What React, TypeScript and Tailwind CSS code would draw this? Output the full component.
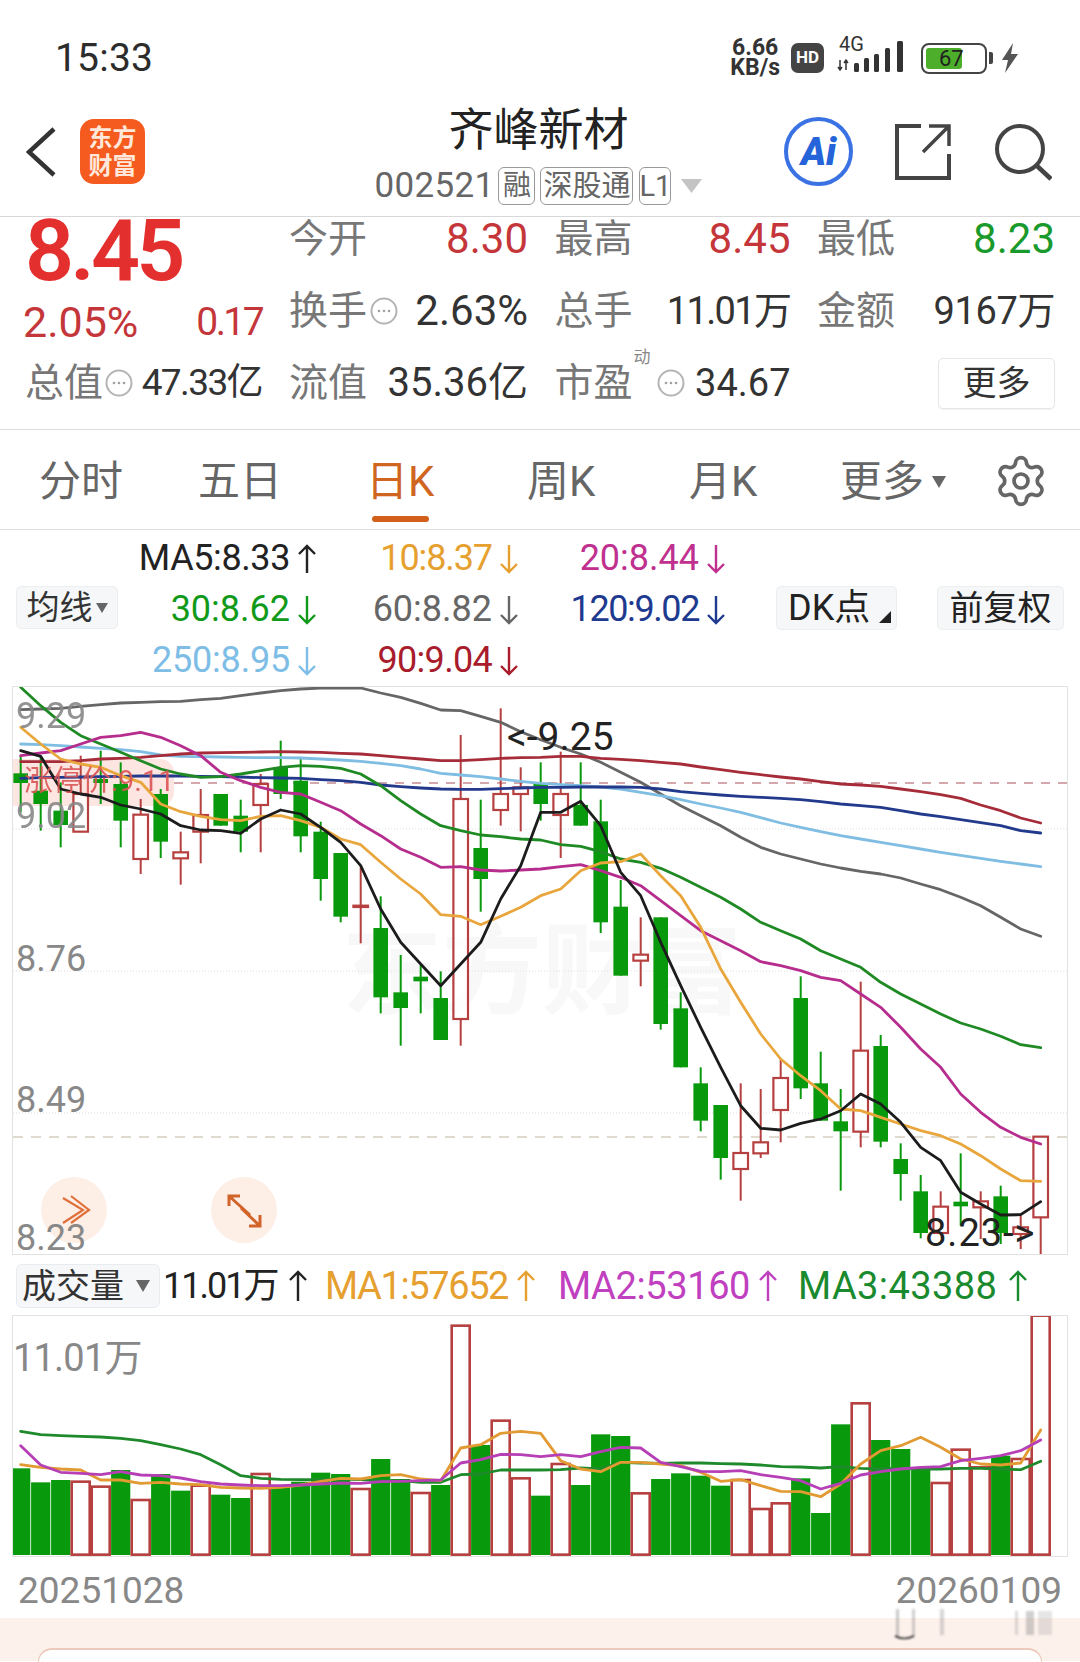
import React from "react";
import { Settings } from "lucide-react";

const X = (i: number) => 20.7 + 20 * i;
const Y = (z: number) => 680 + z / 3;
const GREEN = "#089a0c";
const RED = "#b5403f";

// [kind, bodyTop, bodyBottom, wickTop, wickBottom] in zoom units
type C = [string, number, number, number, number];
const K: C[] = [
  ["g",283,312,230,400],["g",335,375,230,455],["g",395,438,310,505],["r",345,458,230,458],["g",300,312,215,375],
  ["g",315,425,250,505],["r",407,540,360,585],["g",345,488,330,537],["r",520,538,458,617],["r",408,458,330,553],
  ["g",345,440,345,440],["g",410,458,362,520],["r",315,378,285,520],["g",265,345,185,360],["g",305,472,240,520],
  ["g",458,600,428,665],["g",522,713,522,730],["r",680,684,565,793],["g",747,955,652,1003],["g",940,987,828,1100],
  ["g",893,907,858,1003],["g",957,1083,877,1083],["r",360,1020,168,1100],["g",507,600,362,698],["r",345,393,88,440],
  ["r",325,345,265,457],["g",313,375,250,425],["r",345,408,218,537],["g",378,440,250,440],["g",427,730,362,762],
  ["g",683,890,603,890],["r",827,845,715,922],["g",715,1035,715,1052],["g",988,1165,940,1165],["g",1213,1325,1165,1357],
  ["g",1278,1437,1278,1502],["r",1422,1470,1213,1565],["r",1390,1423,1230,1437],["r",1197,1293,1138,1390],["g",957,1228,892,1260],
  ["g",1213,1325,1118,1325],["g",1327,1357,1230,1535],["r",1115,1358,908,1405],["g",1101,1388,1068,1405],["g",1440,1485,1393,1565],
  ["g",1537,1662,1488,1678],["r",1583,1662,1537,1662],["g",1568,1582,1423,1640],["r",1567,1585,1537,1680],["g",1552,1662,1520,1695],
  ["r",1645,1665,1610,1710],["r",1373,1615,1373,1725],
];

const MA5 = [215,232,330,345,355,378,390,405,440,453,455,463,420,393,405,445,490,560,690,790,855,920,855,790,660,560,400,400,367,440,580,650,790,920,1045,1165,1280,1348,1353,1333,1320,1295,1245,1275,1330,1405,1445,1540,1575,1608,1607,1568];
const MA10 = [145,195,240,255,265,290,310,375,398,412,422,425,412,410,425,445,480,497,550,600,645,707,712,737,712,685,650,630,575,552,548,525,590,650,745,870,970,1065,1140,1190,1235,1290,1295,1315,1335,1355,1370,1395,1430,1470,1505,1507];
const MA20 = [230,222,215,195,175,170,160,175,200,230,280,305,325,340,345,370,395,435,470,510,535,565,563,573,576,573,570,563,557,575,595,620,665,710,755,785,815,848,860,875,895,905,945,985,1045,1110,1165,1245,1300,1345,1375,1395];
const MA30 = [25,80,130,170,195,220,245,270,285,295,293,285,275,265,260,262,268,285,320,365,405,440,455,468,473,480,483,497,502,518,540,550,568,595,625,655,690,730,755,780,815,840,865,910,945,975,1005,1032,1050,1072,1097,1106];
const MA60 = [92,90,88,82,77,72,70,68,67,62,58,50,42,35,30,27,27,27,42,55,73,93,95,112,130,158,182,205,225,250,280,310,345,380,410,440,475,505,525,540,555,567,577,585,597,615,632,655,680,715,750,772];
const MA90 = [248,248,248,245,240,238,235,230,225,222,221,220,219,218,219,220,223,225,230,235,240,245,245,242,238,236,235,232,232,238,241,245,250,255,264,272,280,287,294,300,308,315,318,322,330,338,347,358,378,395,417,432];
const MA120 = [298,296,295,294,293,292,291,291,291,292,293,294,296,297,298,302,305,310,318,323,327,330,331,331,329,327,325,325,324,324,324,325,330,338,343,348,352,355,358,362,368,375,380,385,395,405,413,422,431,440,455,462];
const MA250 = [195,197,200,204,208,212,218,228,232,233,234,235,236,236,237,240,243,247,253,260,270,283,288,293,300,307,313,317,320,324,330,340,350,362,375,387,400,416,432,445,458,470,480,490,500,510,520,529,538,547,555,563];

const V: [string, number][] = [
  ["g",508],["g",550],["g",543],["r",548],["r",563],["g",513],["r",603],["g",525],["g",575],["r",560],["g",587],["g",597],["r",525],
  ["g",565],["g",548],["g",521],["g",525],["r",570],["g",480],["g",540],["r",582],["g",558],["r",80],["g",438],["r",365],["r",538],["g",590],
  ["r",495],["g",558],["g",406],["g",411],["r",583],["g",540],["g",523],["g",530],["g",560],["r",543],["r",630],["r",613],["g",538],["g",642],
  ["g",376],["r",313],["g",423],["g",450],["g",510],["r",552],["r",452],["r",505],["g",470],["r",480],["r",50],
];
const VY = (z: number) => 1300 + z / 3;
const VM1 = [497,505,510,513,543,543,553,550,555,557,565,567,568,565,558,547,538,540,530,527,540,545,447,437,403,397,403,485,510,518,490,490,495,500,520,547,542,560,577,578,593,555,495,455,440,415,445,480,495,498,492,393];
const VM2 = [440,498,520,523,527,518,528,530,537,548,555,558,560,560,558,555,552,553,548,547,545,543,492,482,466,467,473,467,473,458,445,447,490,503,517,518,515,527,535,545,570,553,528,518,510,505,503,485,478,470,455,423];
const VM3 = [397,407,410,412,414,418,425,437,450,467,497,530,538,541,542,542,540,542,545,545,550,550,527,525,513,513,513,512,507,510,490,492,493,492,492,494,495,498,503,504,507,503,508,510,508,510,510,508,508,510,512,487];

const pts = (a: number[], f: (z: number) => number) => a.map((z, i) => `${X(i).toFixed(1)},${f(z).toFixed(1)}`).join(" ");

function Line({ d, c, f, w = 2.8 }: { d: number[]; c: string; f: (z: number) => number; w?: number }) {
  return <polyline points={pts(d, f)} fill="none" stroke={c} strokeWidth={w} strokeLinejoin="round" strokeLinecap="round" />;
}

function Arrow({ c, up, h = 30 }: { c: string; up?: boolean; h?: number }) {
  return (
    <svg width="22" height={h} viewBox={`0 0 22 ${h}`} className="shrink-0">
      {up ? (
        <path d={`M11 ${h - 1}V2M3 10L11 2L19 10`} fill="none" stroke={c} strokeWidth="2.4" />
      ) : (
        <path d={`M11 1V${h - 2}M3 ${h - 10}L11 ${h - 2}L19 ${h - 10}`} fill="none" stroke={c} strokeWidth="2.4" />
      )}
    </svg>
  );
}

function Info() {
  return (
    <svg width="28" height="28" viewBox="0 0 28 28" className="shrink-0">
      <circle cx="14" cy="14" r="12.5" fill="none" stroke="#b4b4b4" strokeWidth="2" />
      <circle cx="9" cy="14" r="1.3" fill="#a0a0a0" />
      <circle cx="14" cy="14" r="1.3" fill="#a0a0a0" />
      <circle cx="19" cy="14" r="1.3" fill="#a0a0a0" />
    </svg>
  );
}

function Stat({ label, value, vc, info, sup, vt = "text-[42px]" }: { label: string; value: string; vc: string; info?: boolean; sup?: boolean; vt?: string }) {
  return (
    <div className="flex h-[44px] items-center justify-between">
      <div className="relative flex items-center">
        <span className="w-[78px] whitespace-nowrap text-[39px] leading-[44px] text-[#777]">{label}</span>
        {sup && <span className="absolute left-[79px] top-[-14px] text-[17px] leading-[20px] text-[#888]">动</span>}
        {info && <span className={sup ? "ml-[24px]" : "ml-[3px]"}><Info /></span>}
      </div>
      <span className={`whitespace-nowrap leading-[44px] ${vc} ${vt}`}>{value}</span>
    </div>
  );
}

function Leg({ t, c, tc, up }: { t: string; c: string; tc: string; up?: boolean }) {
  return (
    <div className="flex h-[51px] items-center justify-end gap-[6px]">
      <span className={`whitespace-nowrap text-[36px] leading-[51px] ${tc}`}>{t}</span>
      <Arrow c={c} up={up} />
    </div>
  );
}

export default function App() {
  return (
    <div className="relative h-[1662px] w-[1080px] overflow-hidden bg-white font-['Roboto','Noto_Sans_CJK_SC',sans-serif]">
      {/* status bar */}
      <div className="flex h-[100px] items-center justify-between pl-[55px] pr-[61px] pt-[16px]">
        <span className="text-[39px] leading-[44px] tracking-[0.2px] text-[#2c2c2c]">15:33</span>
        <div className="flex items-center">
          <div className="flex flex-col items-center text-[23px] font-bold leading-[20px] text-[#333]">
            <span>6.66</span>
            <span>KB/s</span>
          </div>
          <div className="ml-[11px] flex h-[30px] w-[33px] items-center justify-center rounded-[7px] bg-[#444] text-[17px] font-bold text-white">HD</div>
          <div className="relative ml-[13px] h-[36px] w-[69px]">
            <span className="absolute left-[2px] top-[-7px] text-[20px] leading-[22px] text-[#333]">4G</span>
            <svg width="69" height="36" viewBox="0 0 69 36" className="absolute left-0 top-0">
              <path d="M3 20v10M1 27l2 3 2-3M9 30V20M7 23l2-3 2 3" fill="none" stroke="#333" strokeWidth="1.5" />
              <rect x="17" y="23" width="5" height="9" rx="1.5" fill="#333" />
              <rect x="27" y="18" width="5" height="14" rx="1.5" fill="#333" />
              <rect x="37" y="14" width="5" height="18" rx="1.5" fill="#333" />
              <rect x="48" y="8" width="5" height="24" rx="1.5" fill="#333" />
              <rect x="60" y="1" width="6" height="31" rx="1.5" fill="#333" />
            </svg>
          </div>
          <div className="relative ml-[15px] flex h-[31px] w-[66px] items-center rounded-[8px] border-2 border-[#444] p-[3px]">
            <div className="h-full w-[36px] rounded-[3px] bg-[#4cae2a]" />
            <span className="absolute left-[16px] top-[1px] text-[22px] leading-[26px] text-[#222]">67</span>
          </div>
          <div className="ml-[2px] h-[12px] w-[4px] rounded-r-[2px] bg-[#444]" />
          <svg width="18" height="30" viewBox="0 0 18 30" className="ml-[8px]">
            <path d="M12 0L1 17h6l-3 13L17 11h-7z" fill="#555" />
          </svg>
        </div>
      </div>

      {/* nav bar */}
      <div className="flex h-[117px] items-start border-b border-[#d8d8d8]">
        <svg width="30" height="50" viewBox="0 0 30 50" className="ml-[26px] mt-[27px]">
          <path d="M28 2L3 25L28 48" fill="none" stroke="#333" strokeWidth="4.5" />
        </svg>
        <div className="ml-[24px] mt-[19px] flex h-[65px] w-[65px] flex-col items-center justify-center rounded-[14px] bg-[#f55a1e] text-[24px] font-bold leading-[28px] text-[#ffe8da]">
          <span>东方</span>
          <span>财富</span>
        </div>
        <div className="ml-[231px] flex w-[325px] flex-col items-center">
          <div className="mt-[8px] text-[45px] leading-[45px] text-[#222]">齐峰新材</div>
          <div className="mt-[14px] flex h-[38px] items-center text-[#666]">
            <span className="mr-[4px] text-[35px] leading-[38px] tracking-[0.3px]">002521</span>
            <span className="flex h-[38px] w-[37px] items-center justify-center rounded-[6px] border border-[#999] text-[28px] leading-[36px]">融</span>
            <span className="ml-[5px] flex h-[38px] w-[93px] items-center justify-center rounded-[6px] border border-[#999] text-[29px] leading-[36px]">深股通</span>
            <span className="ml-[6px] flex h-[38px] w-[32px] items-center justify-center rounded-[6px] border border-[#999] text-[29px] leading-[36px]">L1</span>
            <svg width="21" height="14" viewBox="0 0 21 14" className="ml-[10px]">
              <path d="M0 0H21L10.5 14Z" fill="#c4c4c4" />
            </svg>
          </div>
        </div>
        <div className="relative ml-[83px] mt-[17px] flex h-[69px] w-[69px] items-center justify-center rounded-full border-4 border-[#3a72e4] text-[38px] font-black italic leading-[40px] text-[#2463d8]">Ai</div>
        <svg width="56" height="56" viewBox="0 0 56 56" className="ml-[42px] mt-[24px]">
          <path d="M26 2H2V54H54V30" fill="none" stroke="#444" strokeWidth="4" />
          <path d="M28 28L54 2M34 2H54V22" fill="none" stroke="#444" strokeWidth="3.5" />
        </svg>
        <svg width="58" height="58" viewBox="0 0 58 58" className="ml-[43px] mt-[23px]">
          <circle cx="26" cy="26" r="23" fill="none" stroke="#444" strokeWidth="4" />
          <path d="M42 42L57 56" fill="none" stroke="#444" strokeWidth="4.5" />
        </svg>
      </div>

      {/* stats */}
      <div className="flex h-[213px] border-b border-[#dcdcdc] pl-[25px]">
        <div className="w-[264px]">
          <div className="mt-[-8px] text-[86px] font-semibold leading-[84px] tracking-[-3.8px] text-[#e3302f]">8.45</div>
          <div className="ml-[-2px] mt-[7px] flex h-[44px] w-[239px] items-center justify-between leading-[44px] text-[#c5363a]">
            <span className="text-[43px]">2.05%</span>
            <span className="text-[39px] tracking-[-2.6px]">0.17</span>
          </div>
          <div className="mt-[17px] flex h-[44px] w-[237px] items-center justify-between">
            <div className="flex items-center">
              <span className="text-[39px] leading-[44px] text-[#777]">总值</span>
              <span className="ml-[2px]"><Info /></span>
            </div>
            <span className="whitespace-nowrap text-[37px] leading-[44px] tracking-[-1.6px] text-[#333]">47.33亿</span>
          </div>
        </div>
        <div className="grid w-[770px] grid-cols-[239px_236px_238px] gap-x-[26.5px]">
          <div className="flex flex-col gap-[28px]">
            <Stat label="今开" value="8.30" vc="text-[#c5363a]" />
            <Stat label="换手" value="2.63%" vc="text-[#333]" info />
            <Stat label="流值" value="35.36亿" vc="text-[#333]" vt="text-[40px]" />
          </div>
          <div className="flex flex-col gap-[28px]">
            <Stat label="最高" value="8.45" vc="text-[#c5363a]" />
            <Stat label="总手" value="11.01万" vc="text-[#333]" vt="text-[38px] tracking-[-1.6px]" />
            <Stat label="市盈" value="34.67" vc="text-[#333]" sup info vt="text-[38px]" />
          </div>
          <div className="flex flex-col gap-[28px]">
            <Stat label="最低" value="8.23" vc="text-[#1a9a2c]" />
            <Stat label="金额" value="9167万" vc="text-[#333]" vt="text-[38px] tracking-[-0.4px]" />
            <div className="flex h-[44px] items-center justify-end">
              <div className="flex h-[51px] w-[117px] shrink-0 items-center justify-center rounded-[5px] border border-[#e6e6e6] text-[34px] text-[#333] shadow-[0_1px_1px_rgba(0,0,0,0.05)]">更多</div>
            </div>
          </div>
        </div>
      </div>

      {/* tabs */}
      <div className="relative flex h-[100px] items-start border-b border-[#dcdcdc] pl-[39px] pt-[30px] text-[42px] leading-[44px] text-[#666]">
        <span className="w-[159px]">分时</span>
        <span className="w-[168px]">五日</span>
        <div className="relative w-[161px] text-[#d0651f]">
          <span>日K</span>
          <div className="absolute left-[6px] top-[56px] h-[6px] w-[57px] rounded-[3px] bg-[#d2601a]" />
        </div>
        <span className="w-[162px]">周K</span>
        <span className="w-[151px]">月K</span>
        <span>更多</span>
        <svg width="14" height="12" viewBox="0 0 14 12" className="ml-[8px] mt-[16px]">
          <path d="M0 0H14L7 12Z" fill="#666" />
        </svg>
        <Settings size={56} strokeWidth={1.6} color="#666" className="ml-[47px] mt-[-7px]" />
      </div>

      {/* legend */}
      <div className="flex h-[156px] items-start pl-[16px] pt-[3px]">
        <div className="mt-[53px] flex h-[43px] w-[102px] items-center justify-center rounded-[5px] border border-[#eeeeee] bg-[#f6f7f8] text-[33px] leading-[40px] text-[#333]">
          <span>均线</span>
          <svg width="12" height="12" viewBox="0 0 12 12" className="ml-[3px]"><path d="M0 1H12L6 11Z" fill="#666" /></svg>
        </div>
        <div className="w-[200px]">
          <Leg t="MA5:8.33" c="#222" tc="tracking-[-0.4px] text-[#222]" up />
          <Leg t="30:8.62" c="#119a1a" tc="text-[#119a1a]" />
          <Leg t="250:8.95" c="#7dbde6" tc="tracking-[-0.2px] text-[#7dbde6]" />
        </div>
        <div className="w-[202px]">
          <Leg t="10:8.37" c="#e6a030" tc="tracking-[-1.1px] text-[#e6a030]" />
          <Leg t="60:8.82" c="#666" tc="text-[#666]" />
          <Leg t="90:9.04" c="#a81c2c" tc="tracking-[-0.7px] text-[#a81c2c]" />
        </div>
        <div className="w-[207px]">
          <Leg t="20:8.44" c="#c0308f" tc="text-[#c0308f]" />
          <Leg t="120:9.02" c="#1e3a8f" tc="tracking-[-1.4px] text-[#1e3a8f]" />
        </div>
        <div className="relative ml-[49px] mt-[53px] flex h-[44px] w-[121px] items-center rounded-[5px] border border-[#eeeeee] bg-[#f6f7f8] pl-[11px] text-[36px] leading-[40px] text-[#222]">
          <span>DK点</span>
          <svg width="12" height="12" viewBox="0 0 12 12" className="absolute bottom-[6px] right-[5px]"><path d="M12 0V12H0Z" fill="#222" /></svg>
        </div>
        <div className="ml-[40px] mt-[53px] flex h-[44px] w-[127px] items-center justify-center rounded-[5px] border border-[#eeeeee] bg-[#f6f7f8] text-[34px] leading-[40px] text-[#222]">前复权</div>
      </div>

      {/* candle chart */}
      <div className="relative ml-[12px] h-[569px] w-[1056px] overflow-hidden border border-[#e2e2e2]">
        <div className="absolute left-[329px] top-[230px] whitespace-nowrap text-[100px] font-bold leading-[110px] text-[#f8f8f8]">东方财富</div>
        <div className="absolute left-0 top-[72px] h-[47px] w-[161px] rounded-r-[14px] bg-[#fde5e1]" />
        <div className="absolute left-[28px] top-[490px] h-[66px] w-[66px] rounded-full bg-[#fdeee6]" />
        <div className="absolute left-[198px] top-[490px] h-[66px] w-[66px] rounded-full bg-[#fdeee6]" />
        <svg width="1054" height="567" viewBox="13 688 1054 567" className="absolute left-0 top-0">
          <path d="M13 830H1067M13 972H1067M13 1114H1067" stroke="#e9e9e9" strokeWidth="1.5" strokeDasharray="1 2" />
          <path d="M174 784H1067" stroke="#c58a90" strokeWidth="1.5" strokeDasharray="9 8" />
          <path d="M13 1138H1067" stroke="#d8d0c0" strokeWidth="1.5" strokeDasharray="10 8" />
          {K.map(([k, bt, bb, wt, wb], i) =>
            k === "g" ? (
              <g key={i}>
                <line x1={X(i)} x2={X(i)} y1={Y(wt)} y2={Y(wb)} stroke={GREEN} strokeWidth="2" />
                <rect x={X(i) - 7.3} y={Y(bt)} width="14.6" height={Y(bb) - Y(bt)} fill={GREEN} />
              </g>
            ) : (
              <g key={i}>
                <line x1={X(i)} x2={X(i)} y1={Y(wt)} y2={Y(bt)} stroke={RED} strokeWidth="2" />
                <line x1={X(i)} x2={X(i)} y1={Y(bb)} y2={Y(wb)} stroke={RED} strokeWidth="2" />
                <rect x={X(i) - 7.3} y={Y(bt)} width="14.6" height={Math.max(Y(bb) - Y(bt), 1)} fill="#fff" fillOpacity="0.75" stroke={RED} strokeWidth="2.2" />
              </g>
            )
          )}
          <Line d={MA60} c="#666" f={Y} />
          <Line d={MA250} c="#7fbde2" f={Y} />
          <Line d={MA120} c="#22398c" f={Y} />
          <Line d={MA90} c="#a52c38" f={Y} />
          <Line d={MA30} c="#1f8a24" f={Y} />
          <Line d={MA20} c="#b62d8e" f={Y} />
          <Line d={MA10} c="#e8a63c" f={Y} />
          <Line d={MA5} c="#1c1c1c" f={Y} />
          <path d="M64 1199L84 1211L64 1224M72 1197L90 1211L72 1224" transform="translate(-1 0)" fill="none" stroke="#e0703a" strokeWidth="2.2" />
          <path d="M229 1197L250 1216M229 1207V1197H240M260 1227L241 1209M260 1216V1227H249" fill="none" stroke="#d2642a" strokeWidth="3" />
        </svg>
        <div className="absolute left-[11px] top-[79px] text-[29px] leading-[30px] text-[#d95555] opacity-90">涨停价:9.11</div>
        <span className="absolute left-[3px] top-[9px] text-[36px] leading-[40px] text-[#888] opacity-90">9.29</span>
        <span className="absolute left-[3px] top-[109px] text-[36px] leading-[40px] text-[#888] opacity-90">9.02</span>
        <span className="absolute left-[3px] top-[252px] text-[36px] leading-[40px] text-[#888]">8.76</span>
        <span className="absolute left-[3px] top-[393px] text-[36px] leading-[40px] text-[#888]">8.49</span>
        <span className="absolute left-[3px] top-[536px] text-[36px] leading-[30px] text-[#888]">8.23</span>
        <span className="absolute left-[494px] top-[30px] whitespace-nowrap text-[39px] leading-[40px] text-[#222]">&lt;-9.25</span>
        <span className="absolute left-[912px] top-[526px] whitespace-nowrap text-[38px] leading-[40px] tracking-[1px] text-[#222]">8.23-&gt;</span>
      </div>

      {/* volume header */}
      <div className="flex h-[60px] items-center pl-[16px] pt-[2px]">
        <div className="flex h-[44px] w-[144px] items-center rounded-[6px] border border-[#e8ebef] bg-[#f6f7f9] pl-[5px] text-[34px] leading-[40px] text-[#333]">
          <span>成交量</span>
          <svg width="14" height="12" viewBox="0 0 14 12" className="ml-[12px]"><path d="M0 0H14L7 12Z" fill="#666" /></svg>
        </div>
        <span className="ml-[3px] w-[113px] whitespace-nowrap text-[36px] leading-[44px] tracking-[-2px] text-[#222]">11.01万</span>
        <span className="ml-[11px]"><Arrow c="#222" up h={32} /></span>
        <span className="ml-[16px] w-[190px] whitespace-nowrap text-[38px] leading-[44px] tracking-[-1.4px] text-[#e6a030]">MA1:57652</span>
        <Arrow c="#e6a030" up h={32} />
        <span className="ml-[21px] w-[199px] whitespace-nowrap text-[38px] leading-[44px] tracking-[-0.4px] text-[#c040c0]">MA2:53160</span>
        <Arrow c="#c040c0" up h={32} />
        <span className="ml-[19px] w-[209px] whitespace-nowrap text-[38px] leading-[44px] tracking-[0.4px] text-[#1a8a2e]">MA3:43388</span>
        <Arrow c="#1a8a2e" up h={32} />
      </div>

      {/* volume chart */}
      <div className="relative ml-[12px] h-[242px] w-[1056px] overflow-hidden border border-[#e2e2e2]">
        <svg width="1054" height="240" viewBox="13 1317 1054 240" className="absolute left-0 top-0">
          {V.map(([k, t], i) =>
            k === "g" ? (
              <rect key={i} x={X(i) - 9.6} y={VY(t)} width="19.2" height={VY(768) - VY(t)} fill={GREEN} />
            ) : (
              <rect key={i} x={X(i) - 9} y={VY(t)} width="18" height={VY(767) - VY(t)} fill="#fff" stroke={RED} strokeWidth="2.6" />
            )
          )}
          <Line d={VM3} c="#1f8a2c" f={VY} />
          <Line d={VM1} c="#e29a32" f={VY} />
          <Line d={VM2} c="#b63fb6" f={VY} />
        </svg>
        <span className="absolute left-0 top-[20px] whitespace-nowrap text-[38px] leading-[44px] tracking-[-0.8px] text-[#888]">11.01万</span>
      </div>

      {/* dates */}
      <div className="flex h-[61px] items-start justify-between pl-[18px] pr-[18px] pt-[12px] text-[37px] leading-[44px] text-[#888]">
        <span>20251028</span>
        <span>20260109</span>
      </div>

      {/* footer */}
      <div className="h-[43px] bg-[#fdf1ec] px-[38px] pt-[30px]">
        <div className="h-[14px] rounded-t-[20px] border-x border-t-2 border-[#eccabd] bg-white" />
      </div>

      {/* watermark smear */}
      <svg width="180" height="40" viewBox="0 0 180 40" className="absolute left-[880px] top-[1603px] blur-[1px]">
        <rect x="16" y="6" width="3" height="28" fill="#888" opacity="0.45" />
        <rect x="32" y="6" width="3" height="28" fill="#888" opacity="0.4" />
        <path d="M15 33Q24 38 34 33" fill="none" stroke="#222" strokeWidth="1.5" />
        <rect x="60" y="6" width="4" height="26" fill="#999" opacity="0.4" />
        <rect x="135" y="8" width="3" height="24" fill="#999" opacity="0.35" />
        <rect x="146" y="8" width="8" height="24" fill="#777" opacity="0.35" />
        <rect x="158" y="8" width="14" height="24" fill="#999" opacity="0.25" />
      </svg>
    </div>
  );
}
